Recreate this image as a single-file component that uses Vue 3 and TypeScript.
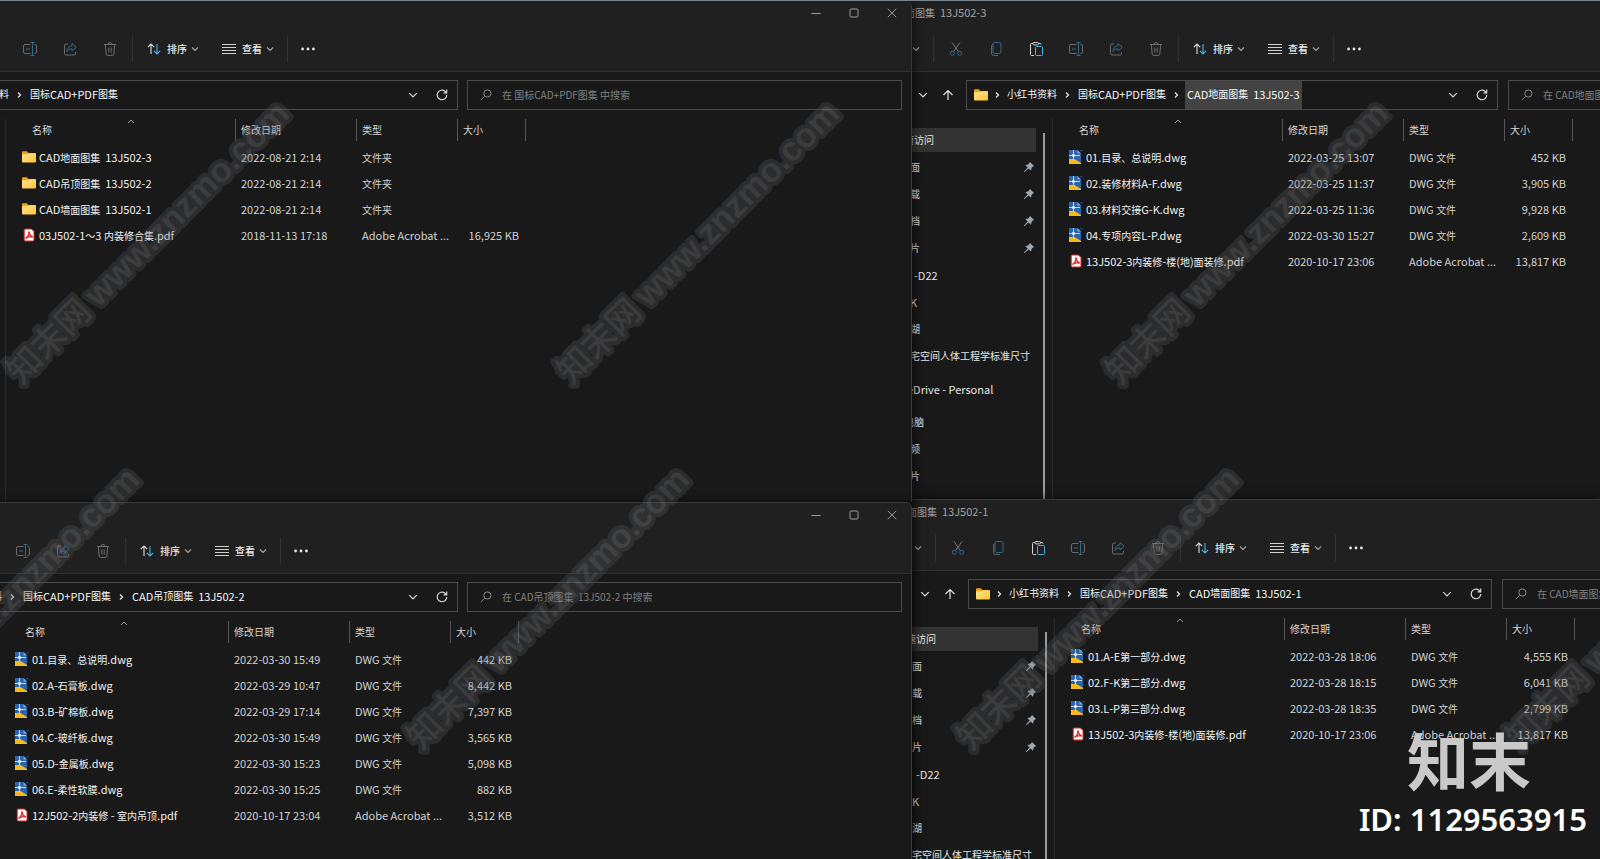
<script setup lang="ts">
type Kind = 'folder' | 'dwg' | 'pdf'
interface FileRow { kind: Kind; name: string; date: string; type: string; size: string }
interface Win {
  id: string
  title: string
  tools: string[]
  crumbs: string[]
  active: boolean
  search: string
  sidebar: boolean
  files: FileRow[]
}
interface Place { label: string; level: string; pin?: boolean; selected?: boolean }
interface Mark { x: number; y: number }

const ACROBAT = 'Adobe Acrobat ...'
const DWG = 'DWG 文件'
const dwg = (name: string, date: string, size: string): FileRow => ({ kind: 'dwg', name, date, type: DWG, size: size + ' KB' })
const pdf = (name: string, date: string, size: string): FileRow => ({ kind: 'pdf', name, date, type: ACROBAT, size: size + ' KB' })
const folder = (name: string, date: string): FileRow => ({ kind: 'folder', name, date, type: '文件夹', size: '' })

const shortTools = ['rename', 'share', 'trash']
const fullTools = ['cut', 'copy', 'paste', 'rename', 'share', 'trash']

const left: Win[] = [
  {
    id: 'atlas', title: '', tools: shortTools, crumbs: ['小红书资料', '国标CAD+PDF图集'], active: false,
    search: '在 国标CAD+PDF图集 中搜索', sidebar: false,
    files: [
      folder('CAD地面图集  13J502-3', '2022-08-21 2:14'),
      folder('CAD吊顶图集  13J502-2', '2022-08-21 2:14'),
      folder('CAD墙面图集  13J502-1', '2022-08-21 2:14'),
      pdf('03J502-1～3 内装修合集.pdf', '2018-11-13 17:18', '16,925'),
    ],
  },
  {
    id: 'ceiling', title: '', tools: shortTools, crumbs: ['小红书资料', '国标CAD+PDF图集', 'CAD吊顶图集  13J502-2'], active: false,
    search: '在 CAD吊顶图集  13J502-2 中搜索', sidebar: false,
    files: [
      dwg('01.目录、总说明.dwg', '2022-03-30 15:49', '442'),
      dwg('02.A-石膏板.dwg', '2022-03-29 10:47', '8,442'),
      dwg('03.B-矿棉板.dwg', '2022-03-29 17:14', '7,397'),
      dwg('04.C-玻纤板.dwg', '2022-03-30 15:49', '3,565'),
      dwg('05.D-金属板.dwg', '2022-03-30 15:23', '5,098'),
      dwg('06.E-柔性软膜.dwg', '2022-03-30 15:25', '882'),
      pdf('12J502-2内装修 - 室内吊顶.pdf', '2020-10-17 23:04', '3,512'),
    ],
  },
]

const right: Win[] = [
  {
    id: 'floor', title: '面图集  13J502-3', tools: fullTools, crumbs: ['小红书资料', '国标CAD+PDF图集', 'CAD地面图集  13J502-3'], active: true,
    search: '在 CAD地面图集', sidebar: true,
    files: [
      dwg('01.目录、总说明.dwg', '2022-03-25 13:07', '452'),
      dwg('02.装修材料A-F.dwg', '2022-03-25 11:37', '3,905'),
      dwg('03.材料交接G-K.dwg', '2022-03-25 11:36', '9,928'),
      dwg('04.专项内容L-P.dwg', '2022-03-30 15:27', '2,609'),
      pdf('13J502-3内装修-楼(地)面装修.pdf', '2020-10-17 23:06', '13,817'),
    ],
  },
  {
    id: 'wall', title: '面图集  13J502-1', tools: fullTools, crumbs: ['小红书资料', '国标CAD+PDF图集', 'CAD墙面图集  13J502-1'], active: false,
    search: '在 CAD墙面图集', sidebar: true,
    files: [
      dwg('01.A-E第一部分.dwg', '2022-03-28 18:06', '4,555'),
      dwg('02.F-K第二部分.dwg', '2022-03-28 18:15', '6,041'),
      dwg('03.L-P第三部分.dwg', '2022-03-28 18:35', '2,799'),
      pdf('13J502-3内装修-楼(地)面装修.pdf', '2020-10-17 23:06', '13,817'),
    ],
  },
]

const columns: { name: string; wins: Win[] }[] = [
  { name: 'left', wins: left },
  { name: 'right', wins: right },
]

const places: Place[] = [
  { label: '速访问', level: 'root', selected: true },
  { label: '面', level: 'child', pin: true },
  { label: '载', level: 'child', pin: true },
  { label: '档', level: 'child', pin: true },
  { label: '片', level: 'child', pin: true },
  { label: '-D22', level: 'plain' },
  { label: 'K', level: 'child' },
  { label: '湖', level: 'child' },
  { label: '宅空间人体工程学标准尺寸', level: 'child' },
  { label: 'eDrive - Personal', level: 'cloud spaced' },
  { label: '电脑', level: 'root spaced' },
  { label: '频', level: 'child' },
  { label: '片', level: 'child' },
]

const toolNames: Record<string, string> = { cut: '剪切', copy: '复制', paste: '粘贴', rename: '重命名', share: '共享', trash: '删除' }

const marks: Mark[] = [
  { x: 24, y: 363 }, { x: 574, y: 363 }, { x: 1123, y: 363 },
  { x: -126, y: 729 }, { x: 424, y: 729 }, { x: 974, y: 729 }, { x: 1523, y: 729 },
]

// Splits a label into Latin and Chinese runs, which are set in different sizes.
const runs = (text: string) =>
  text.split(/([\x20-\x7e]+)/).filter(Boolean).map((s) => ({ s, zh: !/^[\x20-\x7e]/.test(s) }))
</script>

<template>
  <svg class="defs" aria-hidden="true">
    <defs>
      <linearGradient id="gold" x1="0" y1="0" x2="1" y2="1">
        <stop offset="0" stop-color="#ffe394" /><stop offset="1" stop-color="#fbc534" />
      </linearGradient>
    </defs>
    <symbol id="i-rename" viewBox="0 0 14 14"><g fill="none" stroke-width="1"><path d="M7.500 2.500H2A1.500 1.500 0 0 0 .5 4v6A1.500 1.500 0 0 0 2 11.500h5.500M11.500 2.500H12A1.500 1.500 0 0 1 13.500 4v6a1.500 1.500 0 0 1-1.500 1.500h-.5" stroke="#6a6a6a" /><path d="M3 7h4M7.500.5h4M7.500 13.500h4M9.500.5v13" stroke="#2f6a8c" /></g></symbol>
    <symbol id="i-share" viewBox="0 0 14 14"><g fill="none" stroke-width="1"><path d="M5 2H3A1.500 1.500 0 0 0 1.500 3.500v8A1.500 1.500 0 0 0 3 13h8a1.500 1.500 0 0 0 1.500-1.500V10" stroke="#6a6a6a" /><path d="M9 1.500 13.200 5.200 9 9V6.800C6.500 6.800 5 7.800 4 9.500 4.200 6 6 3.900 9 3.700z" stroke="#2f6a8c" stroke-linejoin="round" /></g></symbol>
    <symbol id="i-trash" viewBox="0 0 14 14"><path d="M1 2.500h12M5 2.500a2 2 0 0 1 4 0M2.300 2.500l.9 9.700a1.300 1.300 0 0 0 1.300 1.200h5a1.300 1.300 0 0 0 1.300-1.200l.9-9.700M5.800 5.500v5M8.200 5.500v5" fill="none" stroke="#6e6e6e" /></symbol>
    <symbol id="i-cut" viewBox="0 0 14 14"><g fill="none"><path d="M3 .5 9.500 9.700M11 .5 4.500 9.700" stroke="#7a7a7a" /><circle cx="3.300" cy="11.300" r="2" stroke="#2f6a8c" /><circle cx="10.700" cy="11.300" r="2" stroke="#2f6a8c" /></g></symbol>
    <symbol id="i-copy" viewBox="0 0 14 14"><g fill="none"><rect x="4" y=".5" width="8" height="11" rx="1.500" stroke="#2f6a8c" /><path d="M4 2.500A1.500 1.500 0 0 0 2.500 4v7.500a2 2 0 0 0 2 2H9" stroke="#5d6468" /></g></symbol>
    <symbol id="i-paste" viewBox="0 0 14 14"><g fill="none"><path d="M4 1.500H2.500a1 1 0 0 0-1 1v10a1 1 0 0 0 1 1H5M9.500 1.500H11a1 1 0 0 1 1 1" stroke="#d4d4d4" /><rect x="4" y=".5" width="5.500" height="2.400" rx="1" stroke="#d4d4d4" /><rect x="6.500" y="4.500" width="7" height="9" rx="1" stroke="#4cb2e6" /></g></symbol>
    <symbol id="i-sort" viewBox="0 0 14 14"><g fill="none" stroke-width="1.100"><path d="M4 12V2M.8 5.200 4 2l3.200 3.200" stroke="#dcdcdc" /><path d="M10 2v10M6.800 8.800 10 12l3.200-3.200" stroke="#4cb2e6" /></g></symbol>
    <symbol id="i-list" viewBox="0 0 14 14"><path d="M0 2.500h14M0 5.500h14M0 8.500h14M0 11.500h14" stroke="#d0d0d0" fill="none" /></symbol>
    <symbol id="i-dots" viewBox="0 0 14 14"><g fill="#e8e8e8"><circle cx="1.600" cy="7" r="1.400" /><circle cx="7" cy="7" r="1.400" /><circle cx="12.400" cy="7" r="1.400" /></g></symbol>
    <symbol id="i-down" viewBox="0 0 8 8"><path d="M1 2.500 4 5.500l3-3" fill="none" stroke="currentColor" stroke-width="1.100" /></symbol>
    <symbol id="i-next" viewBox="0 0 5 8"><path d="M1 1.500 3.500 4 1 6.500" fill="none" stroke="#e0e0e0" stroke-width="1.300" /></symbol>
    <symbol id="i-up" viewBox="0 0 12 12"><path d="M6 11V1.500M1.500 6 6 1.500 10.500 6" fill="none" stroke="#e0e0e0" stroke-width="1.200" /></symbol>
    <symbol id="i-refresh" viewBox="0 0 12 12"><path d="M10.800 6A4.800 4.800 0 1 1 9 2.200L10.500 3.700M10.700.6v3.200H7.500" fill="none" stroke="#d8d8d8" stroke-width="1.200" /></symbol>
    <symbol id="i-search" viewBox="0 0 12 12"><path d="M.8 11 4.600 7.300" stroke="#8a8a8a" fill="none" /><circle cx="7.400" cy="4.500" r="3.600" fill="none" stroke="#8a8a8a" /></symbol>
    <symbol id="i-min" viewBox="0 0 10 10"><path d="M.5 5.500h9" stroke="#9a9a9a" /></symbol>
    <symbol id="i-max" viewBox="0 0 10 10"><rect x="1" y="1" width="8" height="8" rx="1" fill="none" stroke="#9a9a9a" /></symbol>
    <symbol id="i-close" viewBox="0 0 10 10"><path d="m.8.8 8.400 8.400M9.200.8.8 9.200" stroke="#9a9a9a" fill="none" /></symbol>
    <symbol id="i-folder" viewBox="0 0 14 14"><path d="M0 3V2.300A1 1 0 0 1 1 1.300h3.800L6.500 3H13a1 1 0 0 1 1 1v3H0z" fill="#eda413" /><path d="M0 5.200a1 1 0 0 1 1-1h4.500L7 3.200h6a1 1 0 0 1 1 1v7.300a1 1 0 0 1-1 1H1a1 1 0 0 1-1-1z" fill="url(#gold)" /></symbol>
    <symbol id="i-dwg" viewBox="0 0 14 14"><path d="M0 0h8.500L12 3.500V14H0z" fill="#2c65ab" /><path d="M0 9h5.500L12 13v1H0z" fill="#f8b91c" /><path d="M8.500 0 12 3.500H8.500z" fill="#7fa8d8" /><path d="M4.500 0v9.500M0 5.500h11" stroke="#c3d5ea" fill="none" /><rect x="3.300" y="4.300" width="2.400" height="2.400" fill="#fff" /><path d="M11 .7h3" stroke="#274a76" /></symbol>
    <symbol id="i-pdf" viewBox="0 0 14 14"><path d="M3 1h6.500L12 3.500V12a1 1 0 0 1-1 1H3.200a1 1 0 0 1-1-1V2A1 1 0 0 1 3 1z" fill="#fff" stroke="#d8231f" /><path d="M7 4c-1 0 .9 3.300 3.300 4.800C11 9.600 6.500 7.700 4.200 9.800 3 11 5.600 10.300 7.300 4.800 7.500 4.300 7.300 4 7 4z" fill="none" stroke="#e0221e" stroke-width="1.300" /></symbol>
    <symbol id="i-pin" viewBox="0 0 12 12"><path d="M7 1 11 5 9.700 5.800 8.500 7 8 9.700 5.600 7.400 1.300 11.200.8 10.700 4.600 6.400 2.300 4 5 3.500 6.200 2.300z" fill="#9da7b0" /></symbol>
    <symbol id="i-caret" viewBox="0 0 8 5"><path d="M1 4 4 1l3 3" fill="none" stroke="#9a9a9a" /></symbol>
  </svg>

  <main class="desktop">
    <div v-for="col in columns" :key="col.name" class="column" :class="col.name">
      <section v-for="w in col.wins" :key="w.id" class="win" :class="w.id">
        <header class="titlebar">
          <h2 v-if="w.title" class="title"><span v-for="(r, i) in runs(w.title)" :key="i" :class="{ zh: r.zh }">{{ r.s }}</span></h2>
          <div v-else class="controls">
            <button aria-label="最小化"><svg class="s10"><use href="#i-min" /></svg></button>
            <button aria-label="最大化"><svg class="s10"><use href="#i-max" /></svg></button>
            <button aria-label="关闭"><svg class="s10"><use href="#i-close" /></svg></button>
          </div>
        </header>

        <div class="toolbar">
          <template v-if="w.sidebar">
            <button class="more-new" aria-label="新建"><svg class="s8"><use href="#i-down" /></svg></button>
            <i class="rule first"></i>
          </template>
          <button v-for="t in w.tools" :key="t" class="tool" :aria-label="toolNames[t]"><svg class="s14"><use :href="'#i-' + t" /></svg></button>
          <i class="rule"></i>
          <button class="menu"><svg class="s14"><use href="#i-sort" /></svg><span class="zh">排序</span><svg class="s8"><use href="#i-down" /></svg></button>
          <button class="menu"><svg class="s14"><use href="#i-list" /></svg><span class="zh">查看</span><svg class="s8"><use href="#i-down" /></svg></button>
          <i class="rule"></i>
          <button class="dots" aria-label="更多"><svg class="s14"><use href="#i-dots" /></svg></button>
        </div>

        <div class="address-row">
          <template v-if="w.sidebar">
            <button class="nav-btn recent" aria-label="最近位置"><svg class="s10"><use href="#i-down" /></svg></button>
            <button class="nav-btn up" aria-label="向上"><svg class="s12"><use href="#i-up" /></svg></button>
          </template>
          <div class="address">
            <nav class="crumbs">
              <svg v-if="w.sidebar" class="s14 crumb-folder"><use href="#i-folder" /></svg>
              <template v-for="(c, ci) in w.crumbs" :key="c">
                <svg v-if="ci > 0 || w.sidebar" class="next"><use href="#i-next" /></svg>
                <button class="crumb" :class="{ active: w.active && ci === w.crumbs.length - 1 }"><span v-for="(r, i) in runs(c)" :key="i" :class="{ zh: r.zh }">{{ r.s }}</span></button>
              </template>
            </nav>
            <button class="history" aria-label="历史"><svg class="s10"><use href="#i-down" /></svg></button>
            <button class="refresh" aria-label="刷新"><svg class="s12"><use href="#i-refresh" /></svg></button>
          </div>
          <label class="search">
            <svg class="s12"><use href="#i-search" /></svg>
            <input type="text" :placeholder="w.search" :aria-label="w.search" />
          </label>
        </div>

        <div class="body">
          <aside v-if="w.sidebar" class="side">
            <ul class="places">
              <li v-for="(p, pi) in places" :key="pi" :class="[p.level, { selected: p.selected }]">
                <button><span class="place"><span v-for="(r, i) in runs(p.label)" :key="i" :class="{ zh: r.zh }">{{ r.s }}</span></span><svg v-if="p.pin" class="s12"><use href="#i-pin" /></svg></button>
              </li>
            </ul>
            <div class="scroll"></div>
          </aside>
          <div class="pane">
            <table>
              <colgroup><col class="c-name" /><col class="c-date" /><col class="c-type" /><col class="c-size" /></colgroup>
              <thead>
                <tr>
                  <th class="name"><div class="zh">名称<svg class="caret"><use href="#i-caret" /></svg></div></th>
                  <th><div class="zh">修改日期</div></th>
                  <th><div class="zh">类型</div></th>
                  <th><div class="zh">大小</div></th>
                </tr>
              </thead>
              <tbody>
                <tr v-for="f in w.files" :key="f.name">
                  <td class="name"><div class="file"><svg class="s14"><use :href="'#i-' + f.kind" /></svg><span><span v-for="(r, i) in runs(f.name)" :key="i" :class="{ zh: r.zh }">{{ r.s }}</span></span></div></td>
                  <td>{{ f.date }}</td>
                  <td><span v-for="(r, i) in runs(f.type)" :key="i" :class="{ zh: r.zh }">{{ r.s }}</span></td>
                  <td class="size">{{ f.size }}</td>
                </tr>
              </tbody>
            </table>
          </div>
        </div>
      </section>
    </div>

    <svg class="marks" aria-hidden="true">
      <g v-for="(m, i) in marks" :key="i" :transform="`translate(${m.x} ${m.y}) rotate(-45)`">
        <text x="-17" y="13"><tspan class="mark-zh">知末网</tspan><tspan class="mark-en" dx="7">www.znzmo.com</tspan></text>
      </g>
    </svg>
    <div class="brand">
      <div class="logo">知末</div>
      <div class="ident">ID: 1129563915</div>
    </div>
  </main>
</template>

<style>
html, body { margin: 0; background: #191919; }
</style>

<style scoped>
.defs { position: absolute; width: 0; height: 0; }
.desktop {
  position: relative; display: grid; grid-template-columns: 57% minmax(0, 1fr);
  height: 100vh; overflow: hidden; box-sizing: border-box;
  border-top: 1px solid #75838c; background: #191919; color: #e6e6e6;
  font: 11px/16px "Noto Sans CJK SC", "Noto Sans", sans-serif;
}
.desktop *, .desktop *::before { box-sizing: border-box; }
.zh { font-size: 10px; }
button { background: none; border: 0; padding: 0; margin: 0; color: inherit; font: inherit; display: flex; align-items: center; white-space: pre; }
svg { display: block; flex: none; }
.s8 { width: 8px; height: 8px; }
.s10 { width: 10px; height: 10px; }
.s12 { width: 12px; height: 12px; }
.s14 { width: 14px; height: 14px; }

.column { display: flex; flex-direction: column; min-width: 0; min-height: 0; }
.column.left { position: relative; z-index: 1; box-shadow: 2px 0 10px rgba(0, 0, 0, .6); }
.win { --inset: 0px; flex: 1 1 0; min-height: 0; overflow: hidden; display: flex; flex-direction: column; background: #191919; }
.atlas { --inset: 7px; flex-grow: 502; }
.ceiling { flex-grow: 356; }
.floor { flex-grow: 499; }
.wall { --inset: 2px; flex-grow: 359; }
.left .win { border-right: 1px solid #3a3a3a; border-top-right-radius: 6px; }
.ceiling, .wall { border-top: 1px solid #383838; box-shadow: 0 -2px 8px rgba(0, 0, 0, .5); }

.titlebar { flex: none; height: 26px; background: #202020; overflow: hidden; }
.title { margin: 0 0 0 calc(var(--inset) - 7px); padding-top: 3px; font-size: 11px; font-weight: 400; line-height: 16px; color: #a0a0a0; white-space: pre; }
.controls { display: flex; justify-content: flex-end; align-items: center; gap: 28px; height: 24px; padding-right: 14px; }

.toolbar { flex: none; display: flex; align-items: center; height: 45px; padding-left: calc(var(--inset) + 3px); background: #202020; border-bottom: 1px solid #303030; }
.right .toolbar { padding-left: var(--inset); }
.tool { width: 40px; height: 32px; justify-content: center; }
.rule { width: 1px; height: 26px; margin: 0 14px 0 2px; background: #333; }
.rule.first { margin: 0 2px 0 13px; }
.more-new { color: #a8a8a8; }
.menu { gap: 4px; margin-right: 23px; color: #eaeaea; font-weight: 500; }
.menu .s14 { margin-right: 2px; }
.menu .s8 { color: #a8a8a8; }
.menu + .rule { margin: 0 13px 0 -10px; }

.address-row { flex: none; display: flex; gap: 9px; padding: 8px 9px 9px 0; height: 47px; }
.address, .search { display: flex; align-items: center; height: 30px; border: 1px solid #4b4b4b; min-width: 0; }
.address { flex: 1 1 0; border-left: 0; overflow: hidden; }
.left .search { flex: 0 0 435px; padding-left: 12px; }
.crumbs { flex: 1; display: flex; align-items: center; align-self: stretch; margin-left: calc(var(--inset) - 50px); }
.crumb { align-self: stretch; padding: 0 2px 2px; color: #f6f6f6; }
.crumb.active { background: #434343; }
.next { width: 5px; height: 8px; margin: 0 6px; }
.history { margin-right: 18px; color: #d0d0d0; }
.refresh { margin-right: 9px; }
.search input { flex: 1; min-width: 0; margin-left: 10px; padding: 0; border: 0; outline: 0; background: none; color: #ddd; font: 10px/16px "Noto Sans CJK SC", sans-serif; }
.search input::placeholder { color: #808080; opacity: 1; }
.nav-btn { color: #e0e0e0; }
.right .address-row { gap: 0; padding-right: 0; padding-left: calc(var(--inset) + 6px); }
.right .address { border-left: 1px solid #4b4b4b; }
.right .up { margin: 0 12px 0 14px; }
.right .crumbs { margin-left: 7px; }
.crumb-folder + .next { margin: 0 5px 0 7px; }
.right .search { flex: 0 0 92px; margin-left: 10px; padding-left: 12px; border-right: 0; overflow: hidden; }
.wall .search { flex-basis: 98px; }

.body { flex: 1; min-height: 0; display: flex; }
.side { flex: 0 0 calc(var(--inset) + 140px); display: flex; overflow: hidden; }
.places { flex: 1; margin: 0; padding: 7px 0 0; list-style: none; overflow: hidden; }
.places li { height: 27px; display: flex; align-items: center; }
.places li.spaced { height: 33px; padding-top: 6px; }
.places button { flex: 1; height: 24px; overflow: hidden; padding-right: 1px; }
.places .selected button { background: #333; }
.place { flex: 1; text-align: left; }
.child .place { margin-left: calc(var(--inset) - 2px); }
.root .place { margin-left: calc(var(--inset) - 8px); }
.cloud .place { margin-left: calc(var(--inset) - 5px); }
.plain .place { margin-left: calc(var(--inset) + 2px); }
.scroll { flex: 0 0 2px; margin: 14px 7px 0 7px; background: #9b9b9b; }
.pane { flex: 1; min-width: 0; overflow: hidden; border-left: 1px solid #2c2c2c; }
.left .pane { margin-left: calc(var(--inset) - 2px); }

table { table-layout: fixed; width: 520px; border-collapse: collapse; border-spacing: 0; }
.c-name { width: 230px; }
.c-date { width: 121px; }
.c-type { width: 101px; }
.c-size { width: 68px; }
th { padding: 0 0 3px; font-weight: 400; text-align: left; color: #d6d6d6; }
th div { position: relative; height: 22px; line-height: 22px; padding-left: 5px; border-right: 1px solid #555; }
th.name div { padding-left: 26px; }
.caret { position: absolute; top: 0; left: 53%; width: 8px; height: 5px; }
td { height: 26px; padding: 0 0 0 5px; color: #d2d2d2; white-space: pre; line-height: 16px; }
td.name { padding-left: 16px; color: #f2f2f2; }
.file { display: flex; align-items: center; gap: 3px; }
td.size { padding-right: 7px; text-align: right; }

.marks { position: absolute; z-index: 2; inset: 0; width: 100%; height: 100%; overflow: hidden; opacity: .3; pointer-events: none; }
.marks text { fill: #8e8e8e; stroke: #565a5e; stroke-width: 8px; stroke-linejoin: round; paint-order: stroke; }
.mark-zh { font: 500 34px "Noto Sans CJK SC", sans-serif; }
.mark-en { font: 700 34px "Liberation Sans", sans-serif; }
.brand { position: absolute; z-index: 3; right: 13px; bottom: 18px; text-align: right; pointer-events: none; }
.logo { padding: 0 56px 6px 0; font: 700 62px/64px "Noto Sans CJK SC", sans-serif; color: #c9c9c9; }
.ident { font: 600 31px/44px "Noto Sans", sans-serif; color: #fff; }
</style>
